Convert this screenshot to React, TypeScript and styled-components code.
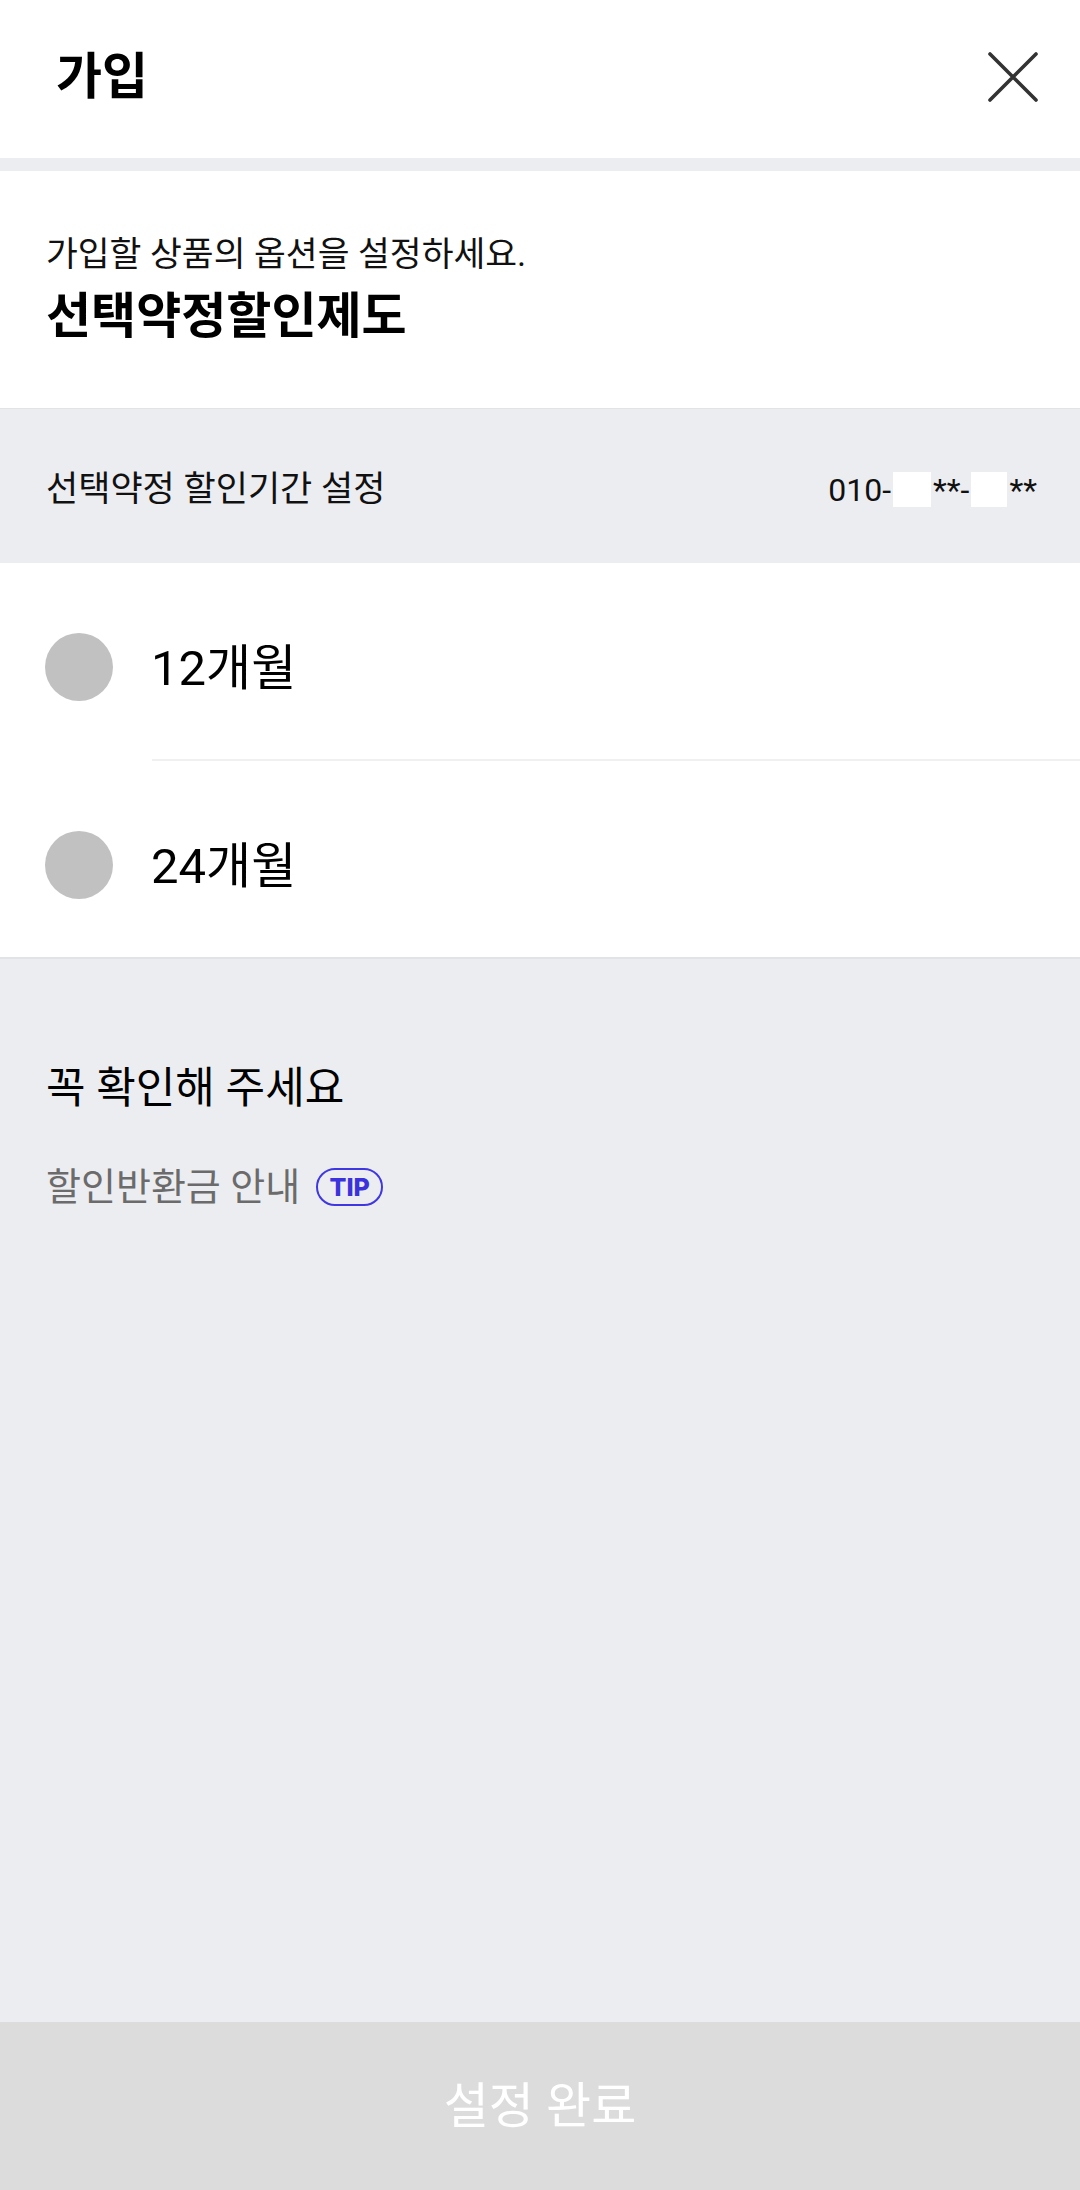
import React, { useState } from "react";
import styled, { createGlobalStyle } from "styled-components";

const GlobalStyle = createGlobalStyle`
  html, body {
    margin: 0;
    padding: 0;
    background: #ffffff;
  }
  body {
    font-family: Roboto, "Noto Sans CJK KR", sans-serif;
    color: #111111;
  }
  * {
    box-sizing: border-box;
  }
`;

const Page = styled.div`
  display: flex;
  flex-direction: column;
  width: 1080px;
  height: 2190px;
  background: #ecedf0;
`;

const Header = styled.header`
  display: flex;
  align-items: center;
  justify-content: space-between;
  height: 158px;
  padding: 0 42px 4px 56px;
  background: #ffffff;
`;

const HeaderTitle = styled.h1`
  margin: 0;
  font-size: 50px;
  line-height: 60px;
  font-weight: 700;
  color: #000000;
`;

const CloseButton = styled.button`
  display: flex;
  padding: 0;
  border: 0;
  background: none;
  cursor: pointer;
`;

const Band = styled.div`
  height: 13px;
  background: #ecedf0;
`;

const Intro = styled.section`
  padding: 60px 46px 61px;
  background: #ffffff;
  border-bottom: 1px solid #e2e3e6;
`;

const IntroText = styled.p`
  margin: 0 0 10px;
  font-size: 34.6px;
  line-height: 46px;
  color: #111111;
`;

const ProductName = styled.h2`
  margin: 0;
  font-size: 49px;
  line-height: 60px;
  font-weight: 700;
  color: #000000;
`;

const PeriodBar = styled.div`
  display: flex;
  align-items: center;
  justify-content: space-between;
  height: 154px;
  padding: 7px 43px 0 46px;
  background: #ecedf0;
`;

const PeriodLabel = styled.span`
  font-size: 35px;
  line-height: 44px;
  color: #111111;
`;

const Phone = styled.span`
  display: flex;
  align-items: center;
  font-size: 32px;
  line-height: 44px;
  color: #111111;
`;

const Mask = styled.span<{ $w: number }>`
  display: inline-block;
  width: ${(p) => p.$w}px;
  height: 35px;
  margin: 0 2px;
  background: #ffffff;
`;

const Options = styled.div`
  background: #ffffff;
  border-bottom: 2px solid #e2e3e6;
`;

const OptionRow = styled.label`
  display: flex;
  align-items: center;
  height: 196px;
  padding: 12px 0 0 45px;
  cursor: pointer;
`;

const Radio = styled.span<{ $checked: boolean }>`
  flex: none;
  width: 68px;
  height: 68px;
  border-radius: 50%;
  background: ${(p) => (p.$checked ? "#3d35e0" : "#c1c1c1")};
`;

const OptionText = styled.span`
  margin-left: 38px;
  padding-top: 3px;
  font-size: 49px;
  line-height: 60px;
  color: #000000;
`;

const Divider = styled.div`
  height: 2px;
  margin-left: 152px;
  background: #f0f0f1;
`;

const Notice = styled.section`
  flex: 1;
  padding: 99px 46px 0;
  background: #ecedf0;
`;

const NoticeTitle = styled.h3`
  margin: 0 0 45px;
  font-size: 43px;
  line-height: 60px;
  font-weight: 400;
  color: #000000;
`;

const NoticeLink = styled.div`
  display: flex;
  align-items: center;
  gap: 16px;
  font-size: 38px;
  line-height: 48px;
  color: #6b6b6b;
`;

const TipBadge = styled.span`
  display: inline-flex;
  align-items: center;
  justify-content: center;
  width: 67px;
  height: 38px;
  border: 2.5px solid #3f37e2;
  border-radius: 19px;
  font-family: Inter, Roboto, sans-serif;
  font-size: 25px;
  font-weight: 800;
  line-height: 1;
  color: #3b32dc;
`;

const SubmitButton = styled.button`
  flex: none;
  height: 168px;
  padding: 0 0 10px;
  border: 0;
  background: #dcdcdc;
  font-family: Roboto, "Noto Sans CJK KR", sans-serif;
  font-size: 49px;
  color: #ffffff;
  cursor: default;
`;

const CloseIcon = () => (
  <svg width="50" height="50" viewBox="0 0 50 50" fill="none">
    <path d="M2 2L48 48M48 2L2 48" stroke="#333333" strokeWidth="3.6" strokeLinecap="round" />
  </svg>
);

const periods = ["12개월", "24개월"];

export default function App() {
  const [selected, setSelected] = useState<string | null>(null);

  return (
    <Page>
      <GlobalStyle />
      <Header>
        <HeaderTitle>가입</HeaderTitle>
        <CloseButton aria-label="닫기">
          <CloseIcon />
        </CloseButton>
      </Header>
      <Band />

      <Intro>
        <IntroText>가입할 상품의 옵션을 설정하세요.</IntroText>
        <ProductName>선택약정할인제도</ProductName>
      </Intro>

      <PeriodBar>
        <PeriodLabel>선택약정 할인기간 설정</PeriodLabel>
        <Phone>
          010-<Mask $w={38} />**-<Mask $w={36} />**
        </Phone>
      </PeriodBar>

      <Options>
        {periods.map((p, i) => (
          <React.Fragment key={p}>
            {i > 0 && <Divider />}
            <OptionRow onClick={() => setSelected(p)}>
              <Radio $checked={selected === p} />
              <OptionText>{p}</OptionText>
            </OptionRow>
          </React.Fragment>
        ))}
      </Options>

      <Notice>
        <NoticeTitle>꼭 확인해 주세요</NoticeTitle>
        <NoticeLink>
          할인반환금 안내
          <TipBadge>TIP</TipBadge>
        </NoticeLink>
      </Notice>

      <SubmitButton disabled={selected === null}>설정 완료</SubmitButton>
    </Page>
  );
}
